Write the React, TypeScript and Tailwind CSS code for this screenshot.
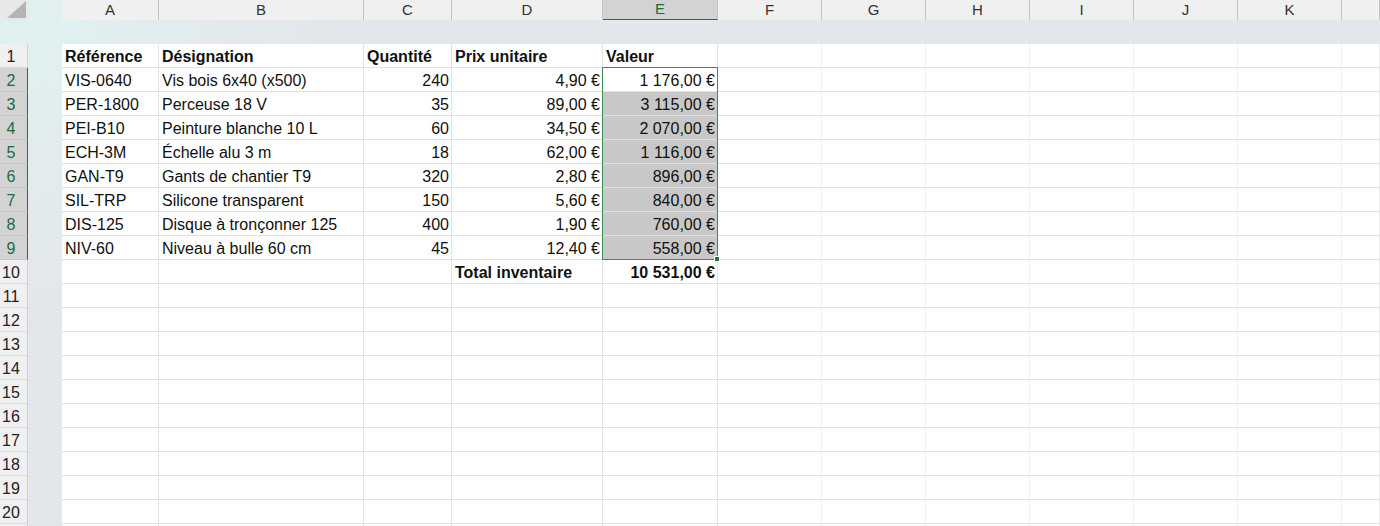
import React from "react";

type Col = { l: string; w: string; v: string };
const cols: Col[] = [
  { l: "A", w: "w-[97px]", v: "border-[#e3e3e3]" },
  { l: "B", w: "w-[205px]", v: "border-[#e3e3e3]" },
  { l: "C", w: "w-[88px]", v: "border-[#e3e3e3]" },
  { l: "D", w: "w-[151px]", v: "border-[#e3e3e3]" },
  { l: "E", w: "w-[115px]", v: "border-[#e3e3e3]" },
  { l: "F", w: "w-[104px]", v: "border-[#efefef]" },
  { l: "G", w: "w-[104px]", v: "border-[#efefef]" },
  { l: "H", w: "w-[104px]", v: "border-[#efefef]" },
  { l: "I", w: "w-[104px]", v: "border-[#efefef]" },
  { l: "J", w: "w-[104px]", v: "border-[#efefef]" },
  { l: "K", w: "w-[104px]", v: "border-[#efefef]" },
  { l: "", w: "w-[38px]", v: "border-[#efefef]" },
];

const nb = "\u00a0";
type Cell = { t: string; right?: boolean; bold?: boolean; fill?: boolean };

const rows: Record<number, Cell[]> = {
  1: [
    { t: "Référence", bold: true },
    { t: "Désignation", bold: true },
    { t: "Quantité", bold: true },
    { t: "Prix unitaire", bold: true },
    { t: "Valeur", bold: true },
  ],
};

const data: [string, string, string, string, string][] = [
  ["VIS-0640", "Vis bois 6x40 (x500)", "240", `4,90${nb}€`, `1${nb}176,00${nb}€`],
  ["PER-1800", "Perceuse 18 V", "35", `89,00${nb}€`, `3${nb}115,00${nb}€`],
  ["PEI-B10", "Peinture blanche 10 L", "60", `34,50${nb}€`, `2${nb}070,00${nb}€`],
  ["ECH-3M", "Échelle alu 3 m", "18", `62,00${nb}€`, `1${nb}116,00${nb}€`],
  ["GAN-T9", "Gants de chantier T9", "320", `2,80${nb}€`, `896,00${nb}€`],
  ["SIL-TRP", "Silicone transparent", "150", `5,60${nb}€`, `840,00${nb}€`],
  ["DIS-125", "Disque à tronçonner 125", "400", `1,90${nb}€`, `760,00${nb}€`],
  ["NIV-60", "Niveau à bulle 60 cm", "45", `12,40${nb}€`, `558,00${nb}€`],
];
data.forEach((d, i) => {
  const r = i + 2;
  rows[r] = [
    { t: d[0] },
    { t: d[1] },
    { t: d[2], right: true },
    { t: d[3], right: true },
    { t: d[4], right: true, fill: r > 2 },
  ];
});
rows[10] = [
  { t: "" },
  { t: "" },
  { t: "" },
  { t: "Total inventaire", bold: true },
  { t: `10${nb}531,00${nb}€`, right: true, bold: true },
];

const rowNums = Array.from({ length: 21 }, (_, i) => i + 1);

export default function App() {
  return (
    <div className="relative w-[1380px] h-[526px] overflow-hidden bg-[radial-gradient(circle_at_30px_25px,#dff1f0_0px,#e2ecee_120px,#e3e6ea_320px)] font-['Liberation_Sans',Arial,sans-serif] text-[16px] text-[#111]">
      {/* column header row */}
      <div className="flex h-[20px]">
        <div className="w-[28px] h-full bg-[#e8e8e8] flex items-end justify-end pr-[2px] pb-[2px]">
          <svg width="20" height="17" viewBox="0 0 20 17">
            <polygon points="1,17 20,17 20,0" fill="#b4b4b4" />
          </svg>
        </div>
        <div className="w-[34px] h-full" />
        {cols.map((c) => (
          <div
            key={c.l || "L"}
            className={`${c.w} h-full shrink-0 flex items-center justify-center border-r text-[15px] ${
              c.l === "E"
                ? "bg-[#d3d3d3] border-[#c4c4c4] border-b border-b-[#217346] text-[#1d6b40]"
                : "bg-[#f0f0f0] border-[#c4c4c4] text-[#333]"
            }`}
          >
            {c.l}
          </div>
        ))}
      </div>
      <div className="h-[24px]" />
      {rowNums.map((r) => {
        const sel = r >= 2 && r <= 9;
        const cells = rows[r] || [];
        return (
          <div key={r} className="flex h-[24px]">
            <div
              className={`w-[28px] h-full shrink-0 flex items-center justify-center pr-[5px] pt-[2px] border-b border-r text-[16px] ${
                sel
                  ? "bg-[#d3d3d3] border-b-[#c6c6c6] border-r-[#217346] text-[#1d6b40]"
                  : "bg-[#f0f0f0] border-b-[#d9d9d9] border-r-[#d0d0d0] text-[#222]"
              }`}
            >
              {r <= 20 ? r : ""}
            </div>
            <div className="w-[34px] h-full shrink-0" />
            {cols.map((c, ci) => {
              const cell = cells[ci];
              return (
                <div
                  key={ci}
                  className={`${c.w} h-full shrink-0 flex items-center pt-[2px] border-r border-b border-b-[#e0e0e0] ${c.v} whitespace-nowrap overflow-hidden ${
                    cell?.right ? "justify-end pr-[2px]" : "pl-[3px]"
                  } ${cell?.bold ? "font-bold" : ""} ${cell?.fill ? "bg-[#c8c8c8]" : "bg-white"}`}
                >
                  {cell?.t}
                </div>
              );
            })}
          </div>
        );
      })}
      {/* selection border E2:E9 */}
      <div className="absolute left-[602px] top-[67px] w-[116px] h-[193px] border border-[#3d8a5c] pointer-events-none" />
      <div className="absolute left-[715px] top-[257px] w-[4px] h-[4px] bg-[#217346] border border-white box-content -translate-x-[1px] -translate-y-[1px]" />
    </div>
  );
}
